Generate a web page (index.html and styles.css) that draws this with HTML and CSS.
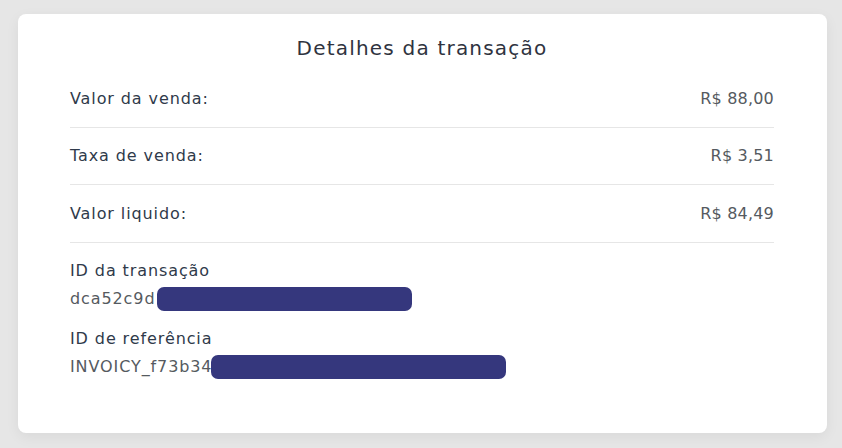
FILE: index.html
```html
<!DOCTYPE html>
<html lang="pt-BR">
<head>
<meta charset="utf-8">
<title>Detalhes da transação</title>
<link rel="stylesheet" href="styles.css">
</head>
<body>
<main class="page">
  <section class="card">
    <h1 class="title">Detalhes da transação</h1>
    <div class="rows">
      <div class="row"><span class="label">Valor da venda:</span><span class="value">R$ 88,00</span></div>
      <div class="row"><span class="label">Taxa de venda:</span><span class="value">R$ 3,51</span></div>
      <div class="row"><span class="label">Valor liquido:</span><span class="value">R$ 84,49</span></div>
    </div>
    <div class="ids">
      <div class="id-item">
        <div class="id-label">ID da transação</div>
        <div class="id-value">dca52c9d<span class="redact redact-1"></span></div>
      </div>
      <div class="id-item">
        <div class="id-label">ID de referência</div>
        <div class="id-value">INVOICY_f73b34<span class="redact redact-2"></span></div>
      </div>
    </div>
  </section>
</main>
</body>
</html>
```
FILE: styles.css
```css
* { box-sizing: border-box; }
html, body { margin: 0; padding: 0; }
body {
  background: #e6e6e6;
  font-family: "DejaVu Sans", "Noto Sans", sans-serif;
  width: 842px;
  height: 448px;
  overflow: hidden;
}
.page {
  padding: 14px 15px 0 18px;
}
.card {
  background: #ffffff;
  border-radius: 8px;
  height: 419px;
  padding: 0 53px 0 52px;
  box-shadow: 0 4px 14px rgba(0,0,0,0.06);
}
.title {
  margin: 0;
  padding-top: 20px;
  height: 56px;
  text-align: center;
  font-weight: 400;
  font-size: 20px;
  line-height: 28px;
  letter-spacing: 1.2px;
  color: #2f3340;
}
.rows { display: flex; flex-direction: column; }
.row {
  display: flex;
  justify-content: space-between;
  align-items: center;
  height: 57.5px;
  border-bottom: 1px solid #e6e6e6;
  font-size: 16px;
}
.label { color: #2f3a4a; letter-spacing: 0.9px; }
.value { color: #555a60; letter-spacing: 0.2px; }
.ids {
  padding-top: 16px;
  display: flex;
  flex-direction: column;
  gap: 12px;
}
.id-label {
  font-size: 16px;
  line-height: 24px;
  letter-spacing: 0.9px;
  color: #2f3a4a;
}
.id-value {
  position: relative;
  font-size: 16px;
  line-height: 32px;
  letter-spacing: 0.9px;
  color: #555a60;
}
.redact {
  position: absolute;
  top: 4px;
  height: 24px;
  background: #35377d;
  border-radius: 7px;
}
.redact-1 { left: 87px; width: 255px; }
.redact-2 { left: 141px; width: 295px; }
```
